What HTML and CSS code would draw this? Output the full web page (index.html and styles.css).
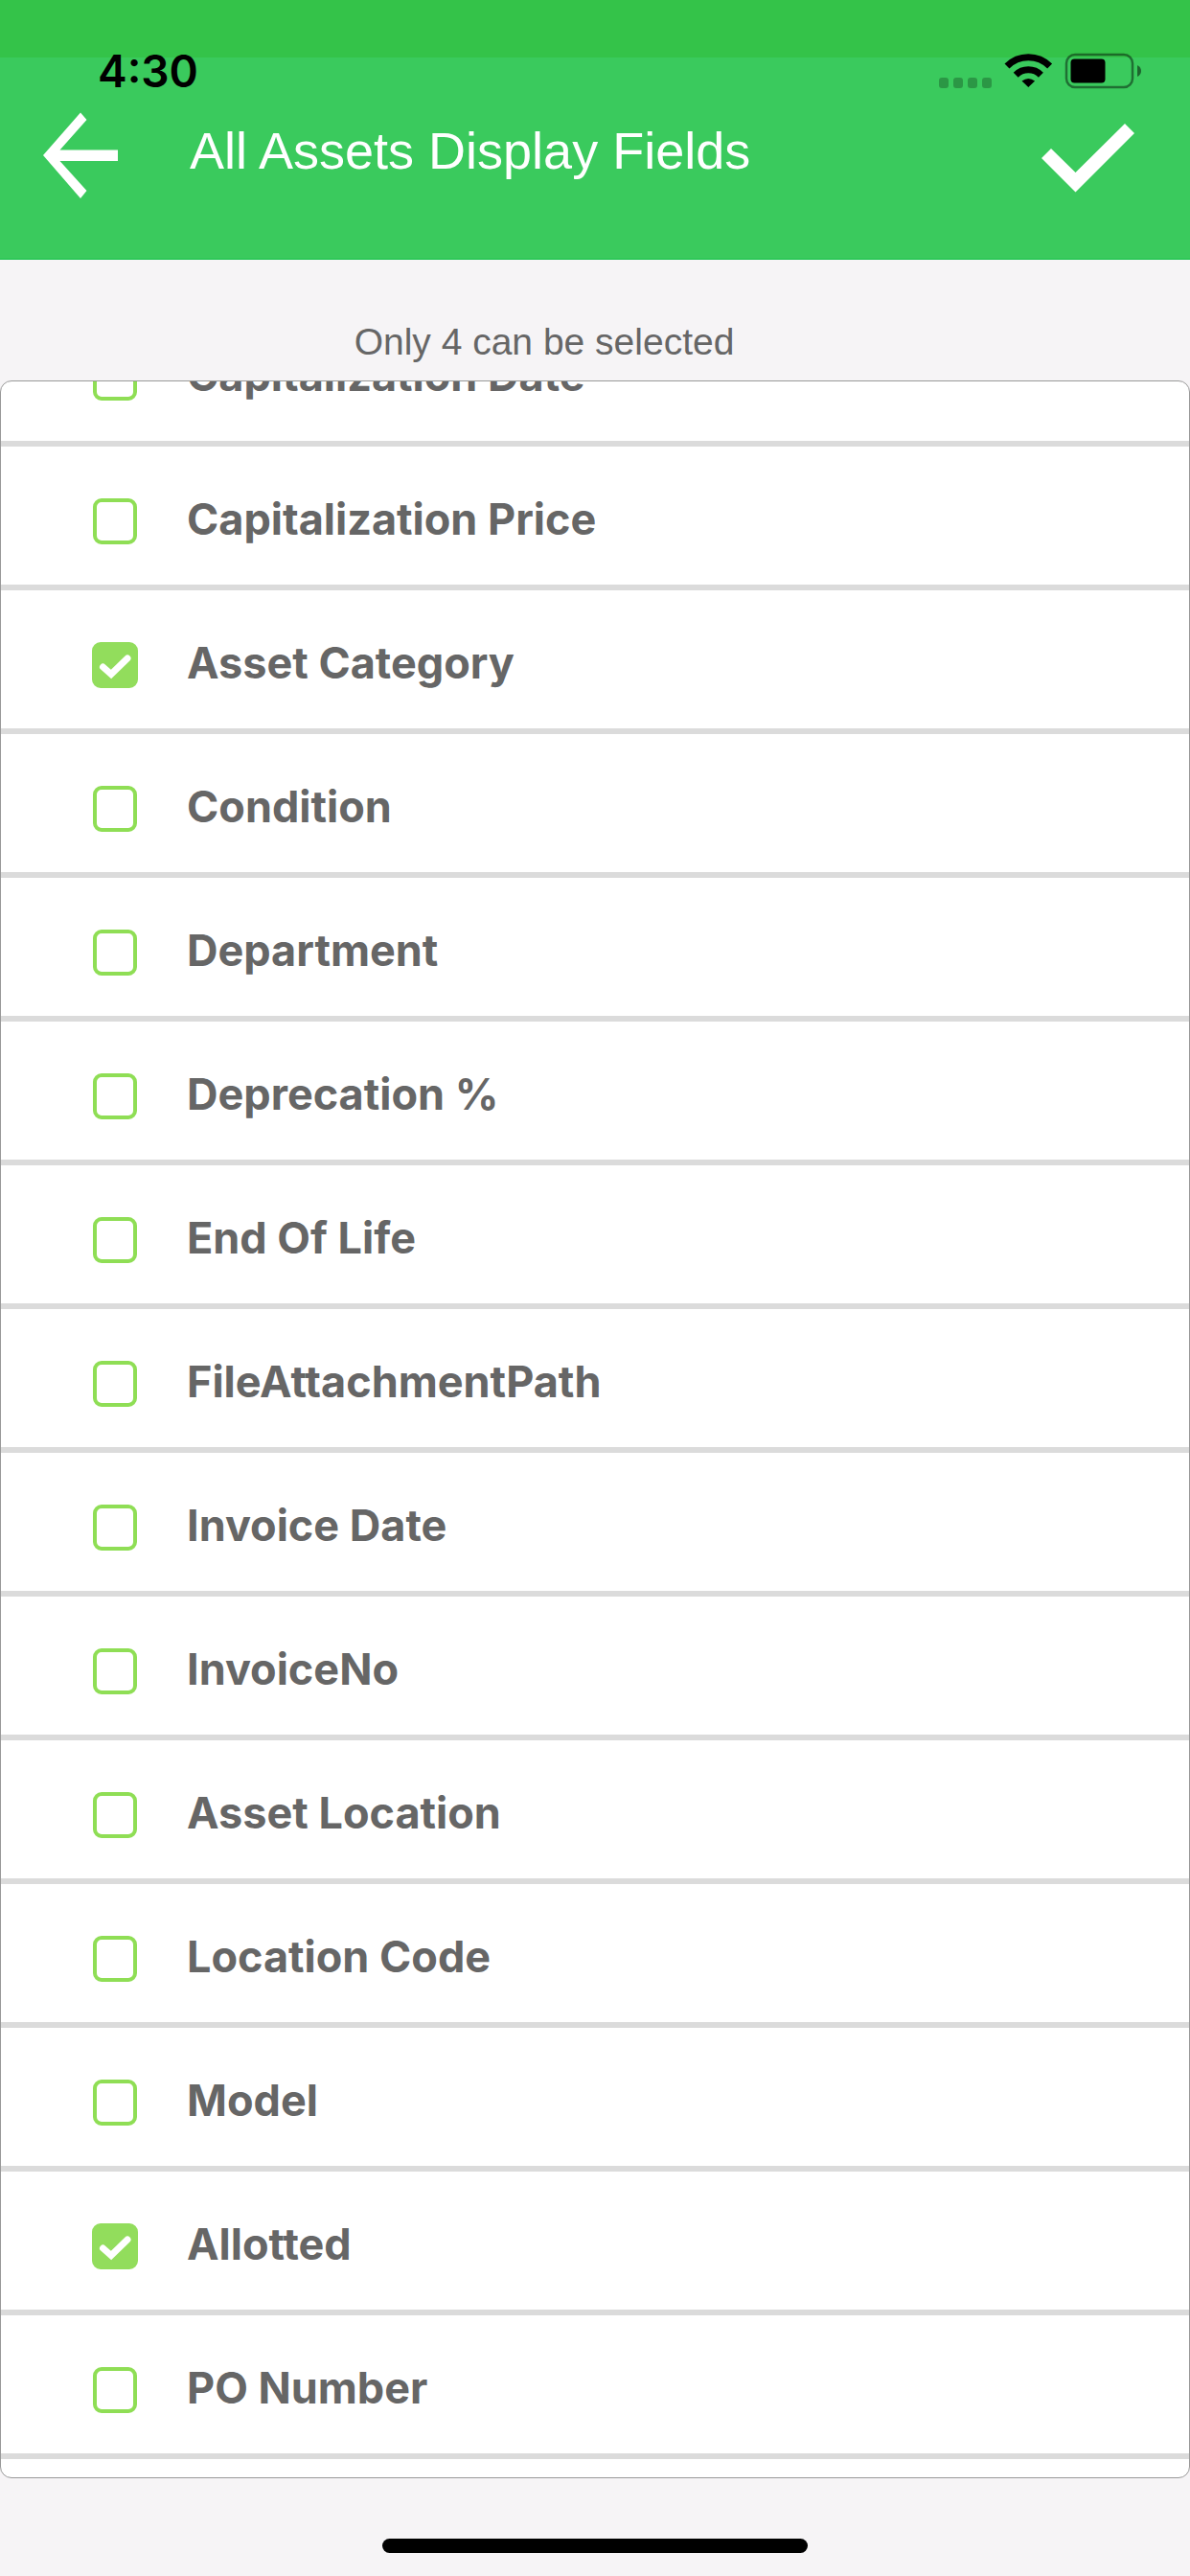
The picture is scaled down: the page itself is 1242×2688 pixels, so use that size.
FILE: index.html
```html
<!DOCTYPE html>
<html lang="en">
<head>
  <meta charset="UTF-8" />
  <meta name="viewport" content="width=device-width, initial-scale=1.0" />
  <title>All Assets Display Fields</title>
  <link rel="stylesheet" href="styles.css">
</head>
<body>
  <svg class="sprite" aria-hidden="true">
    <symbol id="tick" viewBox="0 0 48 48">
      <path d="M11.5 26L20 33.5L37 17" fill="none" stroke="#fff" stroke-width="7" stroke-linecap="round" />
    </symbol>
  </svg>

  <header class="header">
    <div class="status-bar">
      <span class="time">4:30</span>
      <svg class="status-icons" viewBox="979 52 213 44" aria-hidden="true">
        <g fill-opacity=".25">
          <rect x="980" y="81" width="10" height="11" rx="3" />
          <rect x="995" y="81" width="10" height="11" rx="3" />
          <rect x="1010" y="81" width="10" height="11" rx="3" />
          <rect x="1025" y="81" width="10" height="11" rx="3" />
        </g>
        <g fill="none" stroke="#000" stroke-width="7">
          <path d="M1051 69A31.5 31.5 0 0 1 1095.6 69" />
          <path d="M1060.2 78.2A18.5 18.5 0 0 1 1086.4 78.2" />
        </g>
        <path d="M1073.3 91L1066.5 84.5Q1073.3 79.5 1080.1 84.5Z" />
        <rect x="1113" y="57" width="69" height="34" rx="9" fill="none" stroke="#000" stroke-opacity=".45" stroke-width="2.5" />
        <rect x="1117.5" y="61.5" width="36" height="25" rx="4" />
        <path d="M1187 68Q1191 70 1191 74T1187 80Z" fill-opacity=".5" />
      </svg>
    </div>
    <div class="toolbar">
      <button class="icon-btn" type="button" aria-label="Back">
        <svg width="78" height="120" viewBox="45 97 78 120">
          <path fill="#fff" d="M45 162L84 117.5L90.5 125L62.5 156.5H123V168H62.5L90.5 199L84 207Z" />
        </svg>
      </button>
      <h1 class="title">All Assets Display Fields</h1>
      <button class="icon-btn" type="button" aria-label="Save">
        <svg width="97" height="120" viewBox="1087 97 97 120">
          <path fill="#fff" d="M1087 165L1097 155L1122.5 180L1174 129L1184 139L1122.5 200.5Z" />
        </svg>
      </button>
    </div>
  </header>

  <p class="hint">Only 4 can be selected</p>

  <main class="fields">
    <label class="field"><span class="box"><input type="checkbox"><svg><use href="#tick" /></svg></span><span class="name">Capitalization Date</span></label>
    <label class="field"><span class="box"><input type="checkbox"><svg><use href="#tick" /></svg></span><span class="name">Capitalization Price</span></label>
    <label class="field"><span class="box"><input type="checkbox" checked><svg><use href="#tick" /></svg></span><span class="name">Asset Category</span></label>
    <label class="field"><span class="box"><input type="checkbox"><svg><use href="#tick" /></svg></span><span class="name">Condition</span></label>
    <label class="field"><span class="box"><input type="checkbox"><svg><use href="#tick" /></svg></span><span class="name">Department</span></label>
    <label class="field"><span class="box"><input type="checkbox"><svg><use href="#tick" /></svg></span><span class="name">Deprecation %</span></label>
    <label class="field"><span class="box"><input type="checkbox"><svg><use href="#tick" /></svg></span><span class="name">End Of Life</span></label>
    <label class="field"><span class="box"><input type="checkbox"><svg><use href="#tick" /></svg></span><span class="name">FileAttachmentPath</span></label>
    <label class="field"><span class="box"><input type="checkbox"><svg><use href="#tick" /></svg></span><span class="name">Invoice Date</span></label>
    <label class="field"><span class="box"><input type="checkbox"><svg><use href="#tick" /></svg></span><span class="name">InvoiceNo</span></label>
    <label class="field"><span class="box"><input type="checkbox"><svg><use href="#tick" /></svg></span><span class="name">Asset Location</span></label>
    <label class="field"><span class="box"><input type="checkbox"><svg><use href="#tick" /></svg></span><span class="name">Location Code</span></label>
    <label class="field"><span class="box"><input type="checkbox"><svg><use href="#tick" /></svg></span><span class="name">Model</span></label>
    <label class="field"><span class="box"><input type="checkbox" checked><svg><use href="#tick" /></svg></span><span class="name">Allotted</span></label>
    <label class="field"><span class="box"><input type="checkbox"><svg><use href="#tick" /></svg></span><span class="name">PO Number</span></label>
  </main>

  <footer class="footer">
    <div class="home-indicator"></div>
  </footer>
</body>
</html>
```
FILE: styles.css
```css
* {
  box-sizing: border-box;
}

body {
  margin: 0;
  height: 100vh;
  display: flex;
  flex-direction: column;
  background: #f6f4f6;
  color: #666;
  font-family: "Liberation Sans", Arial, sans-serif;
}

.sprite {
  display: none;
}

/* header */
.header {
  flex: none;
  padding-bottom: 52px;
  background: linear-gradient(#34c349 60px, #3aca5d 60px);
  border-bottom: 1px solid #12c048;
}

.status-bar {
  display: flex;
  justify-content: space-between;
  align-items: center;
  padding: 52px 50px 0 102px;
  color: #000;
}

.time {
  font: 600 46px/44px Inter, sans-serif;
}

.status-icons {
  width: 213px;
  height: 44px;
}

.toolbar {
  display: flex;
  align-items: center;
  height: 122px;
  padding: 0 58px 0 45px;
}

.icon-btn {
  padding: 0;
  border: 0;
  background: none;
  cursor: pointer;
}

.icon-btn svg {
  display: block;
}

.title {
  flex: 1;
  margin: 0 0 0 75px;
  color: #fff;
  font-size: 54px;
  font-weight: normal;
  line-height: 60px;
}

.hint {
  flex: none;
  margin: 0;
  padding: 64px 106px 18px 0;
  font-size: 39px;
  line-height: 44px;
  text-align: center;
}

/* list, scrolled to its lower end */
.fields {
  flex: 1;
  min-height: 0;
  display: flex;
  flex-direction: column;
  justify-content: flex-end;
  padding-bottom: 19px;
  overflow: hidden;
  background: #fff;
  border: 1px solid #999;
  border-radius: 12px;
}

.field {
  flex: none;
  display: flex;
  align-items: center;
  gap: 51px;
  height: 150px;
  padding: 12px 95px 0;
  border-bottom: 6px solid #dbdbdb;
  cursor: pointer;
}

.name {
  padding-bottom: 4px;
  font: 700 45px/48px Inter, sans-serif;
}

.box {
  display: grid;
  width: 48px;
  height: 48px;
}

.box input,
.box svg {
  grid-area: 1 / 1;
  width: 100%;
  height: 100%;
}

.box input {
  appearance: none;
  width: 46px;
  margin: 0 1px;
  border: 4px solid #8fde55;
  border-radius: 9px;
}

.box input:checked {
  width: 48px;
  margin: 0;
  background: #92dd5c;
  border-color: #92dd5c;
}

.box svg {
  visibility: hidden;
  pointer-events: none;
}

.box input:checked + svg {
  visibility: visible;
}

.footer {
  flex: none;
  display: flex;
  justify-content: center;
  padding: 63px 0 24px;
}

.home-indicator {
  width: 444px;
  height: 15px;
  background: #000;
  border-radius: 8px;
}
```
